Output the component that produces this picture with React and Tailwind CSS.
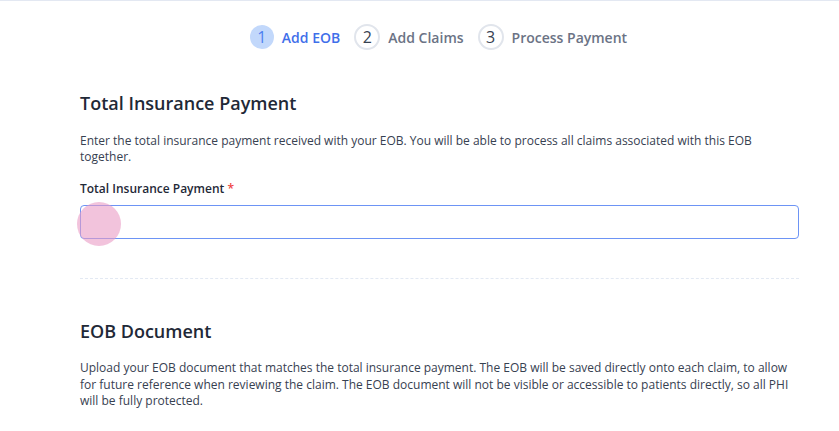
import React from "react";

const steps = [
  { n: 1, label: "Add EOB", active: true },
  { n: 2, label: "Add Claims", active: false },
  { n: 3, label: "Process Payment", active: false },
];

const App = () => {
  return (
    <div
      className="min-h-screen bg-white border-t border-[#e3e8f2] text-[#1f2937]"
      style={{ fontFamily: '"Open Sans", "Noto Sans", sans-serif' }}
    >
      {/* Stepper */}
      <div className="flex justify-center items-center pt-[23px] h-[49px] pl-[52px]">
        {steps.map((s) => (
          <div key={s.n} className="flex items-center mr-[14px]">
            <div
              className={
                s.active
                  ? "w-[24px] h-[24px] rounded-full bg-[#c2d8fb] text-[#4d7ff0] flex items-center justify-center text-[16px] leading-none"
                  : "w-[26px] h-[26px] rounded-full border-2 border-[#e1e5ec] text-[#374151] flex items-center justify-center text-[16px] leading-none"
              }
            >
              {s.n}
            </div>
            <span
              className={
                "ml-[8px] text-[14px] font-semibold " +
                (s.active ? "text-[#3f6fea]" : "text-[#6b7385]")
              }
            >
              {s.label}
            </span>
          </div>
        ))}
      </div>

      <div className="pl-[80px] pr-[40px]">
        {/* Total Insurance Payment */}
        <h2 className="mt-[41px] text-[18px] font-semibold leading-[24px] text-[#1f2937]">
          Total Insurance Payment
        </h2>
        <p className="mt-[18px] text-[12px] leading-[16px] text-[#374151]">
          Enter the total insurance payment received with your EOB. You will be
          able to process all claims associated with this EOB together.
        </p>
        <div className="mt-[16px] text-[12px] font-semibold leading-[16px] text-[#1f2937]">
          Total Insurance Payment <span className="text-[#ef4444]">*</span>
        </div>
        <div className="relative mt-[8px]">
          <input
            className="w-full h-[34px] rounded-[4px] border-[1.5px] border-[#6d94f5] outline-none px-3 text-[14px]"
            type="text"
          />
          <div className="absolute left-[-3px] top-[-3px] w-[44px] h-[44px] rounded-full bg-[#e99bc4] opacity-60 pointer-events-none" />
        </div>

        <div className="mt-[39px] border-t border-dashed border-[#e3e9f3]" />

        {/* EOB Document */}
        <h2 className="mt-[40px] text-[18px] font-semibold leading-[24px] text-[#1f2937]">
          EOB Document
        </h2>
        <p className="mt-[17px] text-[12px] leading-[16.5px] text-[#374151]">
          Upload your EOB document that matches the total insurance payment. The
          EOB will be saved directly onto each claim, to allow for future
          reference when reviewing the claim. The EOB document will not be
          visible or accessible to patients directly, so all PHI will be fully
          protected.
        </p>
      </div>
    </div>
  );
};

export default App;
